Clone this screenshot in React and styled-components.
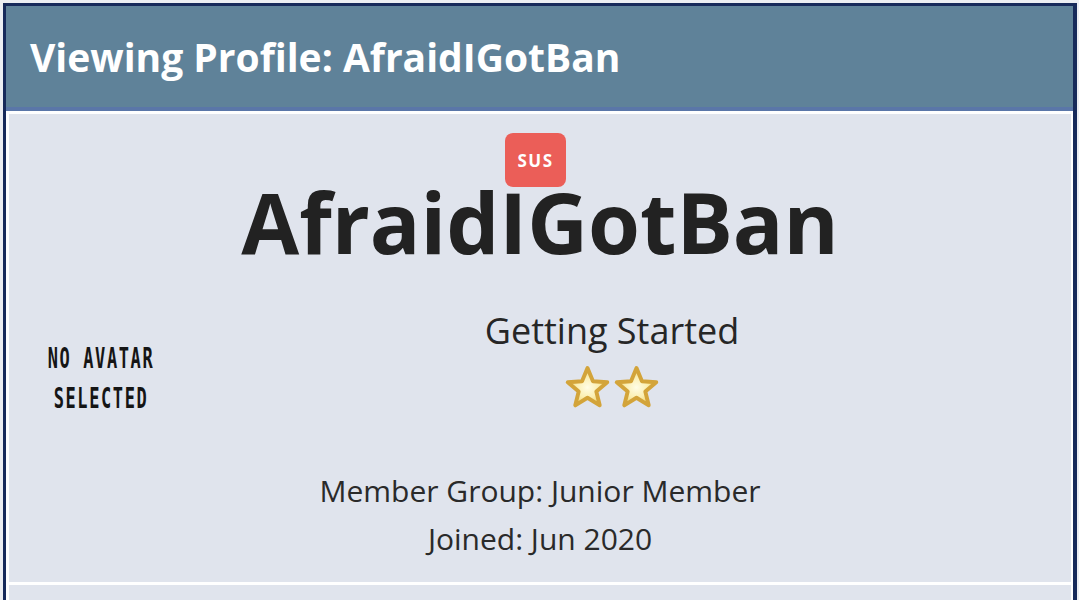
import React from "react";
import styled, { createGlobalStyle } from "styled-components";

const GlobalStyle = createGlobalStyle`
  body {
    margin: 0;
    background: #eceef2;
    font-family: "Open Sans", "Noto Sans", sans-serif;
  }
`;

const Star = () => (
    <svg width="47" height="46" viewBox="0 0 48 47">
        <defs>
            <radialGradient id="starFill" cx="50%" cy="52%" r="55%">
                <stop offset="0%" stopColor="#fffde6" />
                <stop offset="50%" stopColor="#fbefb2" />
                <stop offset="100%" stopColor="#eccd5e" />
            </radialGradient>
        </defs>
        <polygon
            points="24,3 29.6,16.6 44.2,17.6 33,27 36.5,41.2 24,33.5 11.5,41.2 15,27 3.8,17.6 18.4,16.6"
            fill="url(#starFill)"
            stroke="#d3a43a"
            strokeWidth="4"
            strokeLinejoin="round"
        />
    </svg>
);

const App = () => {
    return (
        <>
            <GlobalStyle />
            <Frame>
                <Header>
                    <Title>Viewing Profile: AfraidIGotBan</Title>
                </Header>
                <Body>
                    <Panel>
                        <Badge>SUS</Badge>
                        <UserName>AfraidIGotBan</UserName>
                        <MiddleRow>
                            <Avatar>
                                <AvatarLine>NO AVATAR</AvatarLine>
                                <AvatarLine>SELECTED</AvatarLine>
                            </Avatar>
                            <Rank>
                                <RankTitle>Getting Started</RankTitle>
                                <Stars>
                                    <Star />
                                    <Star />
                                </Stars>
                            </Rank>
                        </MiddleRow>
                        <Info>
                            <InfoLine>Member Group: Junior Member</InfoLine>
                            <InfoLine>Joined: Jun 2020</InfoLine>
                        </Info>
                    </Panel>
                    <Panel $short />
                </Body>
            </Frame>
        </>
    );
};

export default App;

// Styled Components
const Frame = styled.div`
  margin: 3px 2px 0 3px;
  border: 3px solid #172a5a;
  border-right-width: 4px;
  border-bottom: none;
  background: #ffffff;
`;

const Header = styled.div`
  height: 101px;
  display: flex;
  align-items: center;
  padding-left: 24px;
  background: #5f8299;
  border-bottom: 4px solid #5a76a8;
`;

const Title = styled.h1`
  margin: 0;
  font-size: 39px;
  font-weight: 700;
  color: #ffffff;
`;

const Body = styled.div`
  display: flex;
  flex-direction: column;
  gap: 3px;
  padding: 3px 2px 3px 3px;
  background: #ffffff;
`;

const Panel = styled.div`
  background: #e0e4ed;
  text-align: center;
  padding: ${(p) => (p.$short ? "0" : "19px 0 19px")};
  height: ${(p) => (p.$short ? "80px" : "auto")};
  color: #2a2a2a;
`;

const Badge = styled.div`
  display: inline-flex;
  align-items: center;
  justify-content: center;
  width: 61px;
  height: 54px;
  margin-right: 9px;
  border-radius: 8px;
  background: #eb5e58;
  color: #ffffff;
  font-size: 17px;
  font-weight: 700;
  letter-spacing: 1.5px;
`;

const UserName = styled.div`
  font-size: 84px;
  font-weight: 700;
  line-height: 70px;
  color: #222222;
`;

const MiddleRow = styled.div`
  display: flex;
  align-items: flex-start;
  margin-top: 52px;
`;

const Avatar = styled.div`
  width: 184px;
  padding-top: 29px;
  font-family: "DejaVu Sans Mono", monospace;
  font-size: 17px;
  font-weight: 700;
  letter-spacing: 1.6px;
  color: #151515;
`;

const AvatarLine = styled.div`
  line-height: 40px;
  transform: scaleY(1.7);
`;

const Rank = styled.div`
  flex: 1;
  margin-right: 40px;
  display: flex;
  flex-direction: column;
  align-items: center;
`;

const RankTitle = styled.div`
  font-size: 36px;
  line-height: 44px;
  color: #262626;
`;

const Stars = styled.div`
  display: flex;
  gap: 2px;
  margin-top: 12px;
  height: 46px;
`;

const Info = styled.div`
  margin-top: 49px;
`;

const InfoLine = styled.div`
  font-size: 30px;
  line-height: 48px;
  color: #2a2a2a;
`;
